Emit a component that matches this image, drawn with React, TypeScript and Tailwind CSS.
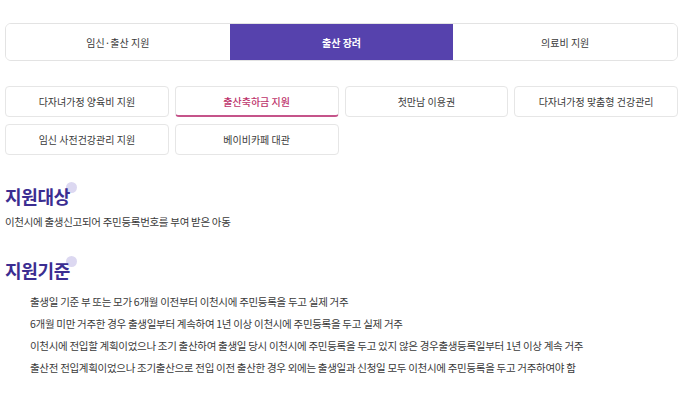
import React from 'react';

const topTabs = ['임신·출산 지원', '출산 장려', '의료비 지원'];
const subTabs = [
  '다자녀가정 양육비 지원',
  '출산축하금 지원',
  '첫만남 이용권',
  '다자녀가정 맞춤형 건강관리',
  '임신 사전건강관리 지원',
  '베이비카페 대관',
];
const criteria = [
  '출생일 기준 부 또는 모가 6개월 이전부터 이천시에 주민등록을 두고 실제 거주',
  '6개월 미만 거주한 경우 출생일부터 계속하여 1년 이상 이천시에 주민등록을 두고 실제 거주',
  '이천시에 전입할 계획이었으나 조기 출산하여 출생일 당시 이천시에 주민등록을 두고 있지 않은 경우출생등록일부터 1년 이상 계속 거주',
  '출산전 전입계획이었으나 조기출산으로 전입 이전 출산한 경우 외에는 출생일과 신청일 모두 이천시에 주민등록을 두고 거주하여야 함',
];

function Heading({ children }: { children: React.ReactNode }) {
  return (
    <h2 className="relative inline-block text-[18px] font-bold leading-none tracking-[-0.3px] text-[#3b2d91]">
      <span className="absolute -right-[7px] -top-[5px] h-[11px] w-[11px] rounded-full bg-[#dcd8f1]" />
      <span className="relative">{children}</span>
    </h2>
  );
}

export default function App() {
  const active = 1;
  const activeSub = 1;

  return (
    <div className="h-[400px] w-[680px] overflow-hidden bg-white font-['Noto_Sans_CJK_KR','Noto_Sans',sans-serif] text-[#333]">
      <div className="ml-[5px] w-[673px] pt-[23px]">
        {/* 상단 탭 */}
        <div className="flex h-[38px] overflow-hidden rounded-[6px] border border-[#e3e3e3]">
          {topTabs.map((t, i) => (
            <div
              key={t}
              className={`flex flex-1 items-center justify-center text-[10px] ${
                i === active
                  ? 'bg-[#5642ad] font-bold text-white'
                  : 'bg-white text-[#3a3a3a]'
              } ${i > 0 && i !== active && i - 1 !== active ? 'border-l border-[#e3e3e3]' : ''}`}
            >
              {t}
            </div>
          ))}
        </div>

        {/* 세부 탭 */}
        <div className="mt-[25px] grid grid-cols-4 gap-x-[6px] gap-y-[7px]">
          {subTabs.map((t, i) => (
            <div
              key={t}
              className={`flex h-[31px] items-center justify-center rounded-[4px] border text-[10px] ${
                i === activeSub
                  ? 'border-[#e6e6e6] border-b-2 border-b-[#c5548a] font-medium text-[#bd346c]'
                  : 'border-[#e6e6e6] text-[#3a3a3a]'
              }`}
            >
              {t}
            </div>
          ))}
        </div>

        {/* 지원대상 */}
        <div className="mt-[30px]">
          <Heading>지원대상</Heading>
          <p className="mt-[5px] text-[10.5px] leading-[15px] tracking-[-0.3px] text-[#3a3a3a]">
            이천시에 출생신고되어 주민등록번호를 부여 받은 아동
          </p>
        </div>

        {/* 지원기준 */}
        <div className="mt-[30px]">
          <Heading>지원기준</Heading>
          <ul className="mt-[12px] flex flex-col gap-[8px] pl-[25px]">
            {criteria.map((c) => (
              <li key={c} className="text-[10.5px] leading-[14px] tracking-[-0.3px] text-[#3a3a3a]">
                {c}
              </li>
            ))}
          </ul>
        </div>

        <div className="mt-[28px]">
          <Heading>지원금액</Heading>
        </div>
      </div>
    </div>
  );
}
